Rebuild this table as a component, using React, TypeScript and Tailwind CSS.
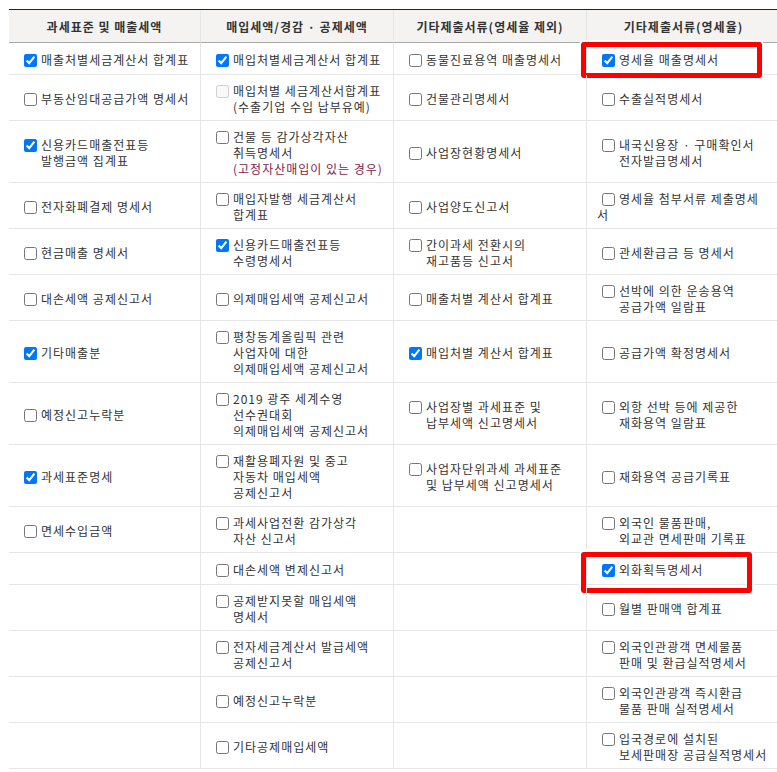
import React from "react";

type Line = string | { text: string; tone: "accent" };

type Entry = {
    lines: Line[];
    checked?: boolean;
    disabled?: boolean;
    wrapUnder?: boolean; // second line starts under the checkbox, not under the text
    mark?: string; // red highlight frame classes
} | null;

const headers = [
    "과세표준 및 매출세액",
    "매입세액/경감 · 공제세액",
    "기타제출서류(영세율 제외)",
    "기타제출서류(영세율)",
];

const rows: Entry[][] = [
    [
        { lines: ["매출처별세금계산서 합계표"], checked: true },
        { lines: ["매입처별세금계산서 합계표"], checked: true },
        { lines: ["동물진료용역 매출명세서"] },
        {
            lines: ["영세율 매출명세서"],
            checked: true,
            mark: "left-[-6px] top-[-1px] w-[181px] h-[36px]",
        },
    ],
    [
        { lines: ["부동산임대공급가액 명세서"] },
        { lines: ["매입처별 세금계산서합계표", "(수출기업 수입 납부유예)"], disabled: true },
        { lines: ["건물관리명세서"] },
        { lines: ["수출실적명세서"] },
    ],
    [
        { lines: ["신용카드매출전표등", "발행금액 집계표"], checked: true },
        {
            lines: [
                "건물 등 감가상각자산",
                "취득명세서",
                { text: "(고정자산매입이 있는 경우)", tone: "accent" },
            ],
        },
        { lines: ["사업장현황명세서"] },
        { lines: ["내국신용장 · 구매확인서", "전자발급명세서"] },
    ],
    [
        { lines: ["전자화폐결제 명세서"] },
        { lines: ["매입자발행 세금계산서", "합계표"] },
        { lines: ["사업양도신고서"] },
        { lines: ["영세율 첨부서류 제출명세", "서"], wrapUnder: true },
    ],
    [
        { lines: ["현금매출 명세서"] },
        { lines: ["신용카드매출전표등", "수령명세서"], checked: true },
        { lines: ["간이과세 전환시의", "재고품등 신고서"] },
        { lines: ["관세환급금 등 명세서"] },
    ],
    [
        { lines: ["대손세액 공제신고서"] },
        { lines: ["의제매입세액 공제신고서"] },
        { lines: ["매출처별 계산서 합계표"] },
        { lines: ["선박에 의한 운송용역", "공급가액 일람표"] },
    ],
    [
        { lines: ["기타매출분"], checked: true },
        { lines: ["평창동계올림픽 관련", "사업자에 대한", "의제매입세액 공제신고서"] },
        { lines: ["매입처별 계산서 합계표"], checked: true },
        { lines: ["공급가액 확정명세서"] },
    ],
    [
        { lines: ["예정신고누락분"] },
        { lines: ["2019 광주 세계수영", "선수권대회", "의제매입세액 공제신고서"] },
        { lines: ["사업장별 과세표준 및", "납부세액 신고명세서"] },
        { lines: ["외항 선박 등에 제공한", "재화용역 일람표"] },
    ],
    [
        { lines: ["과세표준명세"], checked: true },
        { lines: ["재활용폐자원 및 중고", "자동차 매입세액", "공제신고서"] },
        { lines: ["사업자단위과세 과세표준", "및 납부세액 신고명세서"] },
        { lines: ["재화용역 공급기록표"] },
    ],
    [
        { lines: ["면세수입금액"] },
        { lines: ["과세사업전환 감가상각", "자산 신고서"] },
        null,
        { lines: ["외국인 물품판매,", "외교관 면세판매 기록표"] },
    ],
    [
        null,
        { lines: ["대손세액 변제신고서"] },
        null,
        {
            lines: ["외화획득명세서"],
            checked: true,
            mark: "left-[-6px] top-[-1px] w-[171px] h-[41px]",
        },
    ],
    [
        null,
        { lines: ["공제받지못할 매입세액", "명세서"] },
        null,
        { lines: ["월별 판매액 합계표"] },
    ],
    [
        null,
        { lines: ["전자세금계산서 발급세액", "공제신고서"] },
        null,
        { lines: ["외국인관광객 면세물품", "판매 및 환급실적명세서"] },
    ],
    [
        null,
        { lines: ["예정신고누락분"] },
        null,
        { lines: ["외국인관광객 즉시환급", "물품 판매 실적명세서"] },
    ],
    [
        null,
        { lines: ["기타공제매입세액"] },
        null,
        { lines: ["입국경로에 설치된", "보세판매장 공급실적명세서"] },
    ],
];

const LineText = ({ line }: { line: Line }) =>
    typeof line === "string" ? (
        <span>{line}</span>
    ) : (
        <span className="text-[#7d2450]">{line.text}</span>
    );

const Box = ({ entry }: { entry: NonNullable<Entry> }) => (
    <input
        type="checkbox"
        defaultChecked={entry.checked}
        disabled={entry.disabled}
        className="m-0 h-[13px] w-[13px] shrink-0"
    />
);

const Cell = ({ entry }: { entry: Entry }) => (
    <div className="relative flex min-h-[32px] items-center border-b border-r border-[#e6e6e6] pl-[10px] pt-[8px] pb-[5px]">
        {entry && !entry.wrapUnder && (
            <div className="flex items-start">
                <span className="ml-[5px] mr-[4px] mt-[2px] flex">
                    <Box entry={entry} />
                </span>
                <div className="flex flex-col whitespace-nowrap">
                    {entry.lines.map((l, i) => (
                        <LineText key={i} line={l} />
                    ))}
                </div>
            </div>
        )}

        {/* wrapped text that flows back under the checkbox */}
        {entry && entry.wrapUnder && (
            <div className="flex flex-col whitespace-nowrap">
                <div className="flex items-start">
                    <span className="ml-[5px] mr-[4px] mt-[2px] flex">
                        <Box entry={entry} />
                    </span>
                    <span>{entry.lines[0] as string}</span>
                </div>
                <span>{entry.lines[1] as string}</span>
            </div>
        )}

        {entry?.mark && (
            <div
                className={`absolute ${entry.mark} rounded-[3px] border-[5px] border-[#ff0000] shadow-[0_0_0_2px_#ffffff]`}
            />
        )}
    </div>
);

export default function App() {
    return (
        <div className="w-[777px] h-[772px] overflow-hidden bg-white pl-[9px] pt-[9px]">
            <div
                className="grid w-[772px] grid-cols-[192px_193px_193px_194px] border-t border-[#222222] text-[12px] leading-[16px] tracking-[1px] text-[#333333]"
                style={{ fontFamily: '"Noto Sans CJK KR", "Noto Sans", sans-serif' }}
            >
                {headers.map((h) => (
                    <div
                        key={h}
                        className="flex h-[33px] items-center justify-center border-b border-r border-b-[#a8a8a8] border-r-[#e6e6e6] bg-[#f4f3f1] pt-[2px] font-bold text-[#333333]"
                    >
                        {h}
                    </div>
                ))}

                {rows.map((row, r) =>
                    row.map((entry, c) => <Cell key={`${r}-${c}`} entry={entry} />)
                )}
            </div>
        </div>
    );
}
